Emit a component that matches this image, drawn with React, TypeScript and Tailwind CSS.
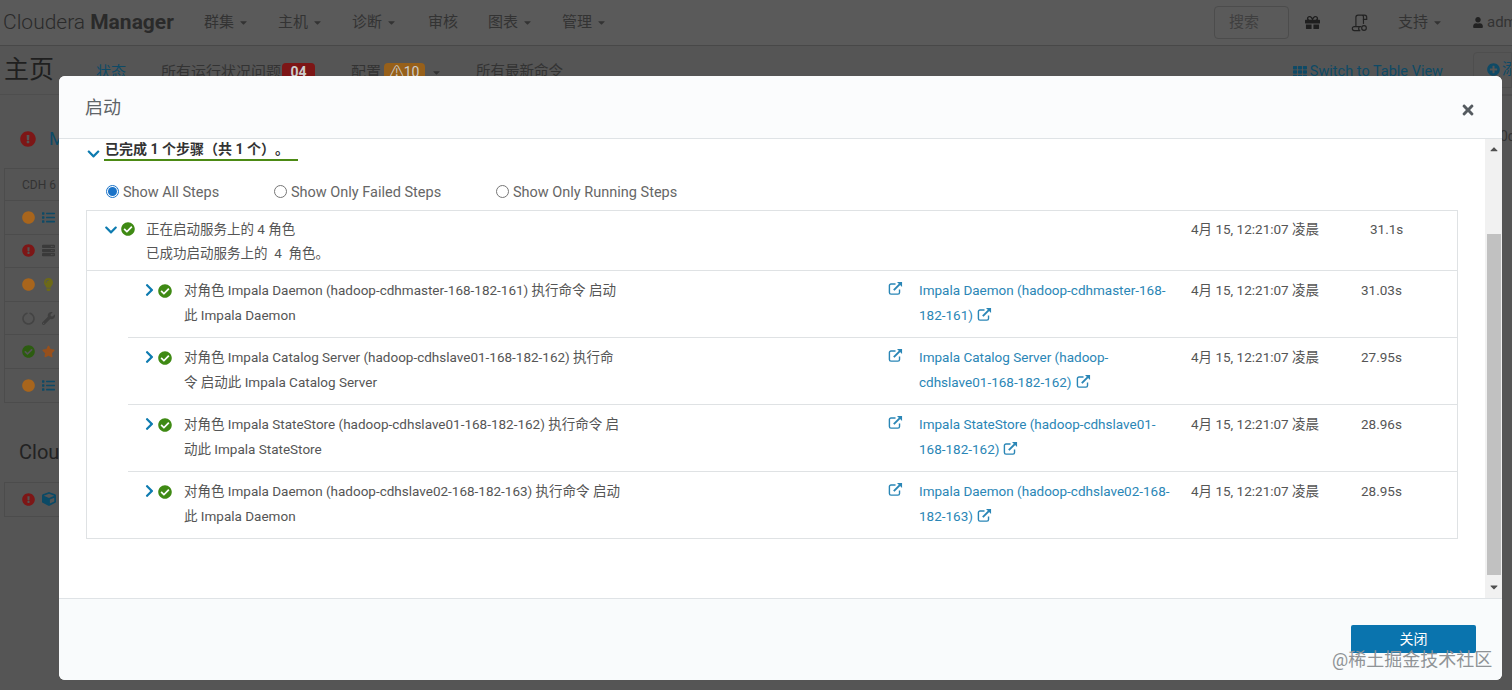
import React from "react";
import {
  FaCaretDown,
  FaCaretUp,
  FaCheckCircle,
  FaChevronDown,
  FaChevronRight,
  FaExclamationCircle,
  FaGift,
  FaList,
  FaPlusCircle,
  FaTh,
  FaTimes,
  FaUser,
  FaCircle,
  FaCircleNotch,
  FaLightbulb,
  FaWrench,
  FaStar,
  FaServer,
  FaCube,
} from "react-icons/fa";

const font = { fontFamily: '"Roboto","Noto Sans CJK SC",sans-serif' };

function LinkIcon({ className = "" }: { className?: string }) {
  return (
    <svg viewBox="0 0 16 16" className={`h-[15px] w-[15px] shrink-0 ${className}`} fill="none">
      <path d="M8 3.2H3.2a1.7 1.7 0 0 0-1.7 1.7v7.4A1.7 1.7 0 0 0 3.2 14h7.4a1.7 1.7 0 0 0 1.7-1.7V9" stroke="currentColor" strokeWidth="1.5" />
      <path d="M6.2 9.8 12.6 3.4" stroke="currentColor" strokeWidth="2" />
      <path d="M9.6 1h5.4v5.4z" fill="currentColor" />
    </svg>
  );
}

function ScrollIcon({ className = "" }: { className?: string }) {
  return (
    <svg viewBox="0 0 18 20" className={className} fill="none" stroke="currentColor" strokeWidth="1.3">
      <path d="M5 14V3.6A2.4 2.4 0 0 1 7.4 1.2h7.2A2.4 2.4 0 0 1 17 3.6V6h-3.6V3.4a2.1 2.1 0 0 0-2-2.2" />
      <path d="M13.4 6v5" />
      <path d="M1 16.2A2.2 2.2 0 0 1 3.2 14h7.6a2.2 2.2 0 0 0-1 4.4H3.2A2.2 2.2 0 0 1 1 16.2z" />
      <circle cx="14" cy="15.6" r="2.6" />
    </svg>
  );
}

const rows = [
  {
    text: ["对角色 Impala Daemon (hadoop-cdhmaster-168-182-161) 执行命令 启动", "此 Impala Daemon"],
    link: ["Impala Daemon (hadoop-cdhmaster-168-", "182-161)"],
    dur: "31.03s",
  },
  {
    text: ["对角色 Impala Catalog Server (hadoop-cdhslave01-168-182-162) 执行命", "令 启动此 Impala Catalog Server"],
    link: ["Impala Catalog Server (hadoop-", "cdhslave01-168-182-162)"],
    dur: "27.95s",
  },
  {
    text: ["对角色 Impala StateStore (hadoop-cdhslave01-168-182-162) 执行命令 启", "动此 Impala StateStore"],
    link: ["Impala StateStore (hadoop-cdhslave01-", "168-182-162)"],
    dur: "28.96s",
  },
  {
    text: ["对角色 Impala Daemon (hadoop-cdhslave02-168-182-163) 执行命令 启动", "此 Impala Daemon"],
    link: ["Impala Daemon (hadoop-cdhslave02-168-", "182-163)"],
    dur: "28.95s",
  },
];

const navItems = [
  { label: "群集", w: "w-[74px]", caret: true },
  { label: "主机", w: "w-[74px]", caret: true },
  { label: "诊断", w: "w-[76px]", caret: true },
  { label: "审核", w: "w-[60px]", caret: false },
  { label: "图表", w: "w-[74px]", caret: true },
  { label: "管理", w: "w-[74px]", caret: true },
];

function Radio({ on, label, className }: { on?: boolean; label: string; className: string }) {
  return (
    <div className={`flex items-center ${className}`}>
      <span
        className={`mb-[3px] flex h-[13px] w-[13px] shrink-0 items-center justify-center rounded-full border bg-white ${
          on ? "border-[#1a73c8]" : "border-[#767676]"
        }`}
      >
        {on && <span className="h-[9px] w-[9px] rounded-full bg-[#1a73c8]" />}
      </span>
      <span className="ml-[4px] whitespace-nowrap text-[14.5px] leading-5 text-[#666]">{label}</span>
    </div>
  );
}

const sideRows = [
  { s: <FaCircle className="h-[13px] w-[13px] text-[#a8651c]" />, i: <FaList className="h-[13px] w-[13px] text-[#0e4a66]" /> },
  { s: <FaExclamationCircle className="h-[13px] w-[13px] text-[#7d1616]" />, i: <FaServer className="h-[13px] w-[13px] text-[#3a3a3a]" /> },
  { s: <FaCircle className="h-[13px] w-[13px] text-[#a8651c]" />, i: <FaLightbulb className="h-[13px] w-[13px] text-[#6d6a17]" /> },
  { s: <FaCircleNotch className="h-[13px] w-[13px] text-[#444]" />, i: <FaWrench className="h-[13px] w-[13px] text-[#3f3f3f]" /> },
  { s: <FaCheckCircle className="h-[13px] w-[13px] text-[#2c5c10]" />, i: <FaStar className="h-[13px] w-[13px] text-[#97501c]" /> },
  { s: <FaCircle className="h-[13px] w-[13px] text-[#a8651c]" />, i: <FaList className="h-[13px] w-[13px] text-[#0e4a66]" /> },
];

export default function App() {
  return (
    <div style={font} className="relative h-[690px] w-[1512px] overflow-hidden bg-[#555555] text-[#2b2b2b]">
      {/* Page under the dialog */}
      <header className="flex h-[46px] items-center border-b border-[#484848] bg-[#5a5a5a]">
        <div className="ml-[3px] w-[201px] whitespace-nowrap text-[21px] text-[#2a2a2a]">
          <span className="font-light">Cloudera </span>
          <span className="font-bold">Manager</span>
        </div>
        {navItems.map((n) => (
          <div key={n.label} className={`flex items-center text-[15px] text-[#333] ${n.w}`}>
            {n.label}
            {n.caret && <FaCaretDown className="ml-[5px] h-[11px] w-[9px] text-[#333]" />}
          </div>
        ))}
        <div className="ml-auto flex items-center">
          <div className="flex h-[33px] w-[75px] items-center rounded-sm border border-[#4c4c4c] pl-[14px] text-[15px] text-[#3f3f3f]">
            搜索
          </div>
          <FaGift className="ml-[16px] h-[15px] w-[15px] text-[#1f1f1f]" />
          <ScrollIcon className="ml-[31px] h-[18px] w-[17px] text-[#222]" />
          <span className="ml-[30px] text-[15px] text-[#333]">支持</span>
          <FaCaretDown className="ml-[5px] h-[11px] w-[9px] text-[#333]" />
          <FaUser className="ml-[31px] h-[11px] w-[10px] text-[#222]" />
          <span className="ml-[4px] w-[25px] overflow-hidden text-[15px] text-[#333]">adm</span>
        </div>
      </header>
      <div className="flex h-[49px] items-center border-b border-[#4e4e4e] pb-[1px]">
        <span className="ml-[4px] w-[92px] text-[25px] text-[#1f1f1f]">主页</span>
        <div className="flex items-center pt-[5px]">
          <span className="w-[65px] text-[15px] text-[#0e4a66]">状态</span>
          <span className="text-[15px] text-[#333]">所有运行状况问题</span>
          <span className="ml-[1px] h-[18px] w-[33px] rounded-sm bg-[#7d1616] text-center text-[14px] font-bold leading-[18px] text-[#ccc]">04</span>
          <span className="ml-[36px] text-[15px] text-[#333]">配置</span>
          <span className="ml-[3px] h-[18px] w-[41px] rounded-sm bg-[#97601a] text-center text-[14px] leading-[18px] text-[#ccc]">⚠10</span>
          <FaCaretDown className="ml-[7px] h-[11px] w-[9px] text-[#333]" />
          <span className="ml-[35px] text-[14.5px] text-[#333]">所有最新命令</span>
        </div>
        <div className="ml-auto flex items-center text-[14.5px] text-[#0e4a66]">
          <FaTh className="mr-[3px] mt-[5px] h-[14px] w-[14px]" />
          <span className="pt-[5px]">Switch to Table View</span>
          <div className="ml-[30px] flex h-[36px] w-[39px] items-center overflow-hidden rounded-l-sm border border-[#4e4e4e] pl-[13px]">
            <FaPlusCircle className="h-[13px] w-[13px] shrink-0" />
            <span className="ml-[2px]">添</span>
          </div>
        </div>
      </div>
      <main className="flex">
        <div className="w-[59px] shrink-0 pl-[4px]">
          <div className="flex h-[73px] items-center overflow-hidden pl-[16px] pt-[14px]">
            <FaExclamationCircle className="h-[16px] w-[16px] shrink-0 text-[#7d1616]" />
            <span className="ml-[13px] text-[18px] text-[#0e4a66]">M</span>
          </div>
          <div className="border border-r-0 border-[#4c4c4c]">
            <div className="h-[31px] overflow-hidden whitespace-nowrap pl-[17px] pt-[6px] text-[12px] leading-5 text-[#333]">CDH 6</div>
            {sideRows.map((r, i) => (
              <div key={i} className="flex h-[33.6px] items-center overflow-hidden border-t border-[#4c4c4c] pl-[17px]">
                {r.s}
                <span className="ml-[7px] shrink-0">{r.i}</span>
              </div>
            ))}
          </div>
          <div className="mt-[35px] overflow-hidden whitespace-nowrap pl-[15px] text-[20px] leading-7 text-[#222]">Cloudera</div>
          <div className="mt-[16px] flex h-[35px] items-center overflow-hidden border border-r-0 border-[#4c4c4c] pl-[17px]">
            <FaExclamationCircle className="h-[13px] w-[13px] shrink-0 text-[#7d1616]" />
            <FaCube className="ml-[7px] h-[14px] w-[14px] shrink-0 text-[#0b4a66]" />
          </div>
        </div>
        <div className="flex-1" />
        <div className="w-[10px] border-t border-[#4e4e4e] pt-[30px] text-[14px] text-[#333]">
          <span className="-ml-[2px]">0d</span>
        </div>
      </main>

      {/* Dialog */}
      <div className="absolute left-[59px] top-[76px] flex h-[604px] w-[1443px] flex-col overflow-hidden rounded-[6px] bg-white">
        <div className="flex h-[63px] shrink-0 items-center justify-between border-b border-[#dfe3e6] bg-[#fbfcfd] pl-[26px] pr-[27px]">
          <span className="text-[18px] text-[#5f6468]">启动</span>
          <FaTimes className="mt-[5px] h-[16px] w-[14px] text-[#555b60]" />
        </div>
        <div className="flex h-[459px] shrink-0">
          <div className="flex-1 px-[27px]">
            <div className="flex h-[23px] items-center">
              <FaChevronDown className="mt-[6px] h-[14px] w-[15px] text-[#0e7bb0]" />
              <div className="ml-[3px] w-[194px] whitespace-nowrap border-b-2 border-[#4c8a14] pl-[1px] text-[14px] font-bold leading-[19px] text-[#333] [text-spacing-trim:space-all]">
                已完成 1 个步骤（共 1 个）。
              </div>
            </div>
            <div className="mt-[20px] flex h-[22px] items-center pl-[20px]">
              <Radio on label="Show All Steps" className="w-[168px]" />
              <Radio label="Show Only Failed Steps" className="w-[222px]" />
              <Radio label="Show Only Running Steps" className="" />
            </div>
            <div className="mt-[6px] border border-[#dfe2e4] text-[13.5px] text-[#555]">
              <div className="flex h-[60px] items-start border-b border-[#dfe2e4] pt-[6px] leading-6">
                <FaChevronDown className="ml-[17px] mt-[6px] h-[14px] w-[14px] shrink-0 text-[#0e7bb0]" />
                <FaCheckCircle className="ml-[3px] mt-[5px] h-[14px] w-[14px] shrink-0 text-[#3f8a14]" />
                <div className="ml-[11px] w-[1045px] whitespace-nowrap">
                  <div>正在启动服务上的 4 角色</div>
                  <div>已成功启动服务上的&nbsp; 4&nbsp; 角色。</div>
                </div>
                <div className="w-[179px] whitespace-nowrap">4月 15, 12:21:07 凌晨</div>
                <div>31.1s</div>
              </div>
              <div className="ml-[41px]">
                {rows.map((r, i) => (
                  <div
                    key={i}
                    className={`flex items-start pt-[7px] leading-[25px] ${i < rows.length - 1 ? "h-[67px] border-b border-[#dfe2e4]" : "h-[66px]"}`}
                  >
                    <FaChevronRight className="ml-[16px] mt-[5px] h-[14px] w-[11px] shrink-0 text-[#0e7bb0]" />
                    <FaCheckCircle className="ml-[3px] mt-[6px] h-[14px] w-[14px] shrink-0 text-[#3f8a14]" />
                    <div className="ml-[12px] w-[704px] shrink-0 whitespace-nowrap">
                      {r.text.map((t) => (
                        <div key={t}>{t}</div>
                      ))}
                    </div>
                    <LinkIcon className="mt-[3px] text-[#2a86b6]" />
                    <div className="ml-[16px] w-[272px] shrink-0 whitespace-nowrap text-[#2a86b6]">
                      <div>{r.link[0]}</div>
                      <div className="flex items-center">
                        {r.link[1]}
                        <LinkIcon className="ml-[4px] mb-[2px]" />
                      </div>
                    </div>
                    <div className="w-[170px] shrink-0 whitespace-nowrap">4月 15, 12:21:07 凌晨</div>
                    <div>{r.dur}</div>
                  </div>
                ))}
              </div>
            </div>
          </div>
          <div className="flex w-[17px] shrink-0 flex-col items-center bg-[#f1f1f1]">
            <FaCaretUp className="mt-[4px] h-[12px] w-[10px] text-[#505050]" />
            <div className="mt-[79px] h-[341px] w-[14px] bg-[#c1c1c1]" />
            <FaCaretDown className="mt-[6px] h-[12px] w-[10px] text-[#505050]" />
          </div>
        </div>
        <div className="flex flex-1 items-start justify-end border-t border-[#dfe3e6] bg-[#f9fbfc] pr-[26px] pt-[26px]">
          <button className="h-[28px] w-[125px] rounded-[2px] bg-[#0a74ae] text-[14px] leading-[28px] text-white">关闭</button>
        </div>
      </div>
      {/* Watermark */}
      <div className="absolute left-[1332px] top-[648px] whitespace-nowrap text-[18px] leading-6 text-[#8f9396]">
        @稀土掘金技术社区
      </div>
    </div>
  );
}
